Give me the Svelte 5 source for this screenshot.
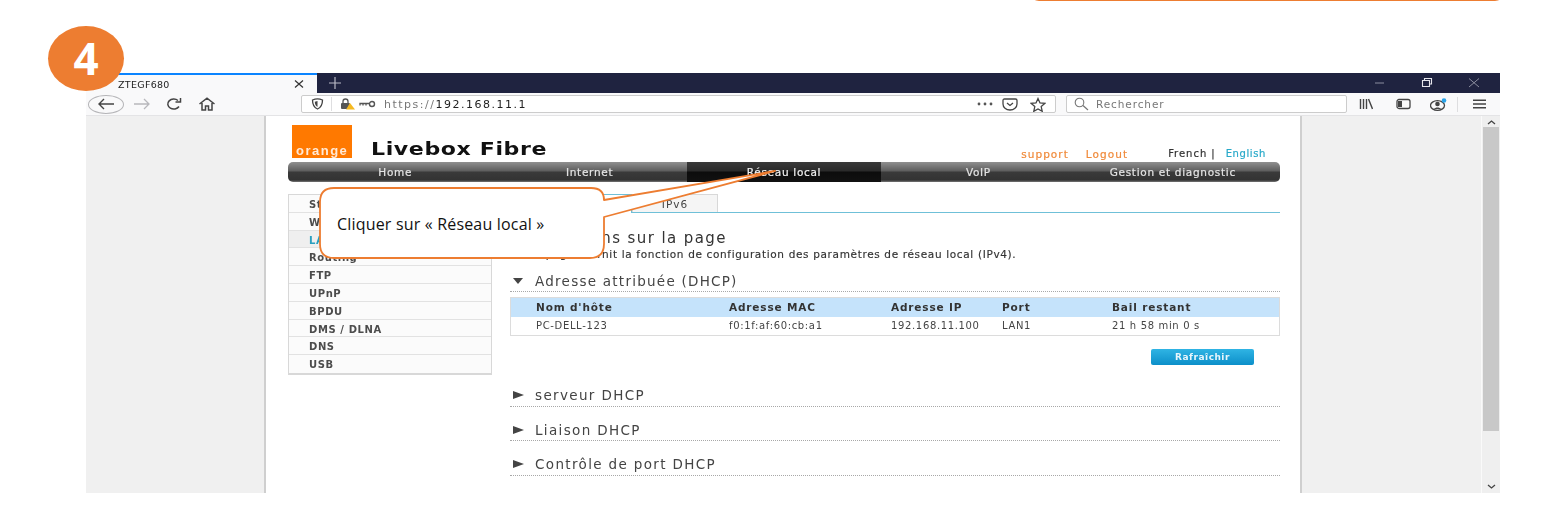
<script>
  const navItems = ['Home', 'Internet', 'Réseau local', 'VoIP', 'Gestion et diagnostic'];
  const sideItems = ['Statut', 'WAN', 'LAN', 'Routing', 'FTP', 'UPnP', 'BPDU', 'DMS / DLNA', 'DNS', 'USB'];
  const closedSections = ['serveur DHCP', 'Liaison DHCP', 'Contrôle de port DHCP'];
</script>

<div class="screen">
  <div class="note-top"></div>

  <div class="browser">
    <div class="tabstrip">
      <div class="tab">
        <span class="tab-title">ZTEGF680</span>
        <svg class="tab-x" width="10" height="10" viewBox="0 0 10 10"><path d="M1 1.500l8 7M9 1.500l-8 7" stroke="#333" stroke-width="1.200" fill="none"/></svg>
      </div>
      <svg class="plus" width="14" height="14" viewBox="0 0 14 14"><path d="M7 1v12M1 7h12" stroke="#b9bac6" stroke-width="1.200"/></svg>
      <div class="winctl">
        <svg width="12" height="12" viewBox="0 0 12 12"><path d="M1 6h9" stroke="#8b8d9e" stroke-width="1"/></svg>
        <svg width="12" height="12" viewBox="0 0 12 12"><path d="M1.500 3.500h7v6h-7zM3.500 3.500v-2h7v5.500h-2" stroke="#e6e6ec" stroke-width="1.100" fill="none"/></svg>
        <svg width="12" height="12" viewBox="0 0 12 12"><path d="M1 1.500l10 8.500M11 1.500l-10 8.500" stroke="#8b8d9e" stroke-width="1" fill="none"/></svg>
      </div>
    </div>

    <div class="toolbar">
      <div class="navbtns">
        <span class="back">
          <svg width="20" height="12" viewBox="0 0 20 12"><path d="M18 6H3M8 1L3 6l5 5" stroke="#444" stroke-width="1.400" fill="none"/></svg>
        </span>
        <svg class="fwd" width="20" height="12" viewBox="0 0 20 12"><path d="M2 6h15M12 1l5 5-5 5" stroke="#b8b8bc" stroke-width="1.300" fill="none"/></svg>
        <svg class="reload" width="18" height="14" viewBox="0 0 18 14"><path d="M14 9.500A6 5 0 1 1 13 3.500M15.500 1v4h-5" stroke="#444" stroke-width="1.500" fill="none"/></svg>
        <svg class="home" width="18" height="14" viewBox="0 0 18 14"><path d="M1.500 7L9 1.200 16.500 7M4 6v7h3.500V9h3v4H14V6" stroke="#444" stroke-width="1.500" fill="none"/></svg>
      </div>

      <div class="urlbar">
        <svg class="shield" width="13" height="12" viewBox="0 0 13 12"><path d="M1.500 2c3-1.300 7-1.300 10 0 0 4-1.500 7.500-5 9-3.500-1.500-5-5-5-9z" stroke="#444" stroke-width="1.300" fill="none"/><path d="M6.500 3v6c-1.800-1-2.600-3-2.700-5.300z" fill="#444"/></svg>
        <span class="sep"></span>
        <svg class="lock" width="16" height="12" viewBox="0 0 16 12"><rect x="1" y="5" width="9" height="6" rx="1" fill="#555"/><path d="M3 5V3.500a2.500 2.500 0 0 1 5 0V5" stroke="#555" stroke-width="1.300" fill="none"/><path d="M10 5l5 6.500H6z" fill="#f5b921"/></svg>
        <svg class="key" width="17" height="8" viewBox="0 0 17 8"><circle cx="13" cy="4" r="2.500" stroke="#555" stroke-width="1.400" fill="none"/><path d="M10 3.500H1v2M4 3.500v2M7 3.500v2" stroke="#555" stroke-width="1.300" fill="none"/></svg>
        <span class="url"><span class="url-dim">https://</span>192.168.11.1</span>
        <svg class="dots" width="16" height="4" viewBox="0 0 16 4"><circle cx="2" cy="2" r="1.400" fill="#555"/><circle cx="8" cy="2" r="1.400" fill="#555"/><circle cx="14" cy="2" r="1.400" fill="#555"/></svg>
        <svg class="pocket" width="16" height="13" viewBox="0 0 16 13"><path d="M1 2.500Q1 1 2.500 1h11Q15 1 15 2.500V6c0 3.500-3 6-7 6S1 9.500 1 6z" stroke="#444" stroke-width="1.300" fill="none"/><path d="M5 5l3 2.500L11 5" stroke="#444" stroke-width="1.300" fill="none"/></svg>
        <svg class="star" width="16" height="15" viewBox="0 0 16 15"><path d="M8 1.500l2 4.400 4.800.5-3.600 3.200 1 4.700L8 11.900l-4.200 2.400 1-4.700L1.200 6.400 6 5.900z" stroke="#444" stroke-width="1.300" fill="none"/></svg>
      </div>

      <div class="searchbar">
        <svg width="15" height="14" viewBox="0 0 15 14"><circle cx="5.500" cy="5.500" r="4.300" stroke="#777" stroke-width="1.100" fill="none"/><path d="M9 8.500l5 4.500" stroke="#777" stroke-width="1.200"/></svg>
        <span>Rechercher</span>
      </div>

      <div class="tools">
        <svg class="t-lib" width="14" height="12" viewBox="0 0 14 12"><path d="M1.500 1v10M4.500 1v10M7.500 1v10M9.500 1l4 10" stroke="#444" stroke-width="1.400" fill="none"/></svg>
        <svg class="t-side" width="15" height="12" viewBox="0 0 15 12"><rect x="1" y="1.500" width="13" height="9" rx="2" stroke="#444" stroke-width="1.300" fill="none"/><rect x="2" y="3" width="4" height="6" fill="#444"/></svg>
        <svg class="t-acc" width="17" height="13" viewBox="0 0 17 13"><ellipse cx="7.500" cy="7.500" rx="7" ry="4.800" stroke="#444" stroke-width="1.300" fill="none"/><circle cx="7.500" cy="6" r="2.300" fill="#444"/><path d="M4 11c1-2 6-2 7 0z" fill="#444"/><circle cx="14" cy="2.500" r="2.300" fill="#2aa3e8"/></svg>
        <span class="sep"></span>
        <svg class="t-menu" width="13" height="10" viewBox="0 0 13 10"><path d="M0 1.200h13M0 5h13M0 8.800h13" stroke="#444" stroke-width="1.400"/></svg>
      </div>
    </div>

    <div class="viewport">
      <div class="page">
        <header class="head">
          <div class="logo"><span>orange</span></div>
          <h1>Livebox Fibre</h1>
          <div class="links">
            <a class="support" href="#top">support</a>
            <a class="logout" href="#top">Logout</a>
            <span class="lang">French |</span>
            <a class="english" href="#top">English</a>
          </div>
        </header>

        <nav class="mainnav">
          {#each navItems as item, i}
            <a href="#top" class:active={i === 2}>{item}</a>
          {/each}
        </nav>

        <div class="body">
          <ul class="side">
            {#each sideItems as item, i}
              <li class:current={i === 2}>{item}</li>
            {/each}
          </ul>

          <main>
            <div class="tabs">
              <span class="subtab on">IPv4</span>
              <span class="subtab">IPv6</span>
            </div>

            <h2>Informations sur la page</h2>
            <p class="desc">Cette page fournit la fonction de configuration des paramètres de réseau local (IPv4).</p>

            <div class="section first">
              <i class="tri down"></i><span>Adresse attribuée (DHCP)</span>
            </div>

            <table>
              <thead>
                <tr><th>Nom d'hôte</th><th>Adresse MAC</th><th>Adresse IP</th><th>Port</th><th>Bail restant</th></tr>
              </thead>
              <tbody>
                <tr><td>PC-DELL-123</td><td>f0:1f:af:60:cb:a1</td><td>192.168.11.100</td><td>LAN1</td><td>21 h 58 min 0 s</td></tr>
              </tbody>
            </table>

            <div class="actions"><button>Rafraîchir</button></div>

            {#each closedSections as s}
              <div class="section">
                <i class="tri right"></i><span>{s}</span>
              </div>
            {/each}
          </main>
        </div>
      </div>

      <div class="gutter"></div>

      <div class="scrollbar">
        <svg width="9" height="6" viewBox="0 0 9 6"><path d="M1 5l3.500-3L8 5" stroke="#444" stroke-width="1.300" fill="none"/></svg>
        <div class="thumb"></div>
        <svg width="9" height="6" viewBox="0 0 9 6"><path d="M1 1l3.500 3L8 1" stroke="#444" stroke-width="1.300" fill="none"/></svg>
      </div>
    </div>
  </div>

  <div class="badge">4</div>

  <div class="callout">
    <svg class="callout-shape" width="470" height="82" viewBox="0 0 470 82">
      <path d="M15 10H272Q285 10 285 22L456 -7L285 39V66Q285 80 271 80H15Q1 80 1 66V24Q1 10 15 10Z" fill="#fff" stroke="#ed7d31" stroke-width="1.800" stroke-linejoin="round"/>
    </svg>
    <span class="callout-text">Cliquer sur « Réseau local »</span>
  </div>
</div>

<style>
  :global(body) {
    margin: 0;
    background: #fff;
  }

  .screen {
    position: relative;
    width: 1557px;
    height: 511px;
    padding-top: 73px;
    box-sizing: border-box;
    overflow: hidden;
    background: #fff;
    font-family: "DejaVu Sans", Verdana, sans-serif;
  }

  .note-top {
    position: absolute;
    left: 1030px;
    top: -20px;
    width: 472px;
    height: 19px;
    border: 1.500px solid #ed7d31;
    border-radius: 9px;
  }

  .browser {
    width: 1414px;
    height: 420px;
    margin-left: 86px;
    display: flex;
    flex-direction: column;
    filter: blur(0.35px);
  }

  .tabstrip {
    height: 20px;
    flex: none;
    display: flex;
    align-items: center;
    background: #1f2340;
  }

  .tab {
    width: 231px;
    height: 20px;
    box-sizing: border-box;
    border-top: 2px solid #0a84ff;
    background: #f9f9fa;
    display: flex;
    align-items: center;
    justify-content: space-between;
    padding: 0 13px 0 32px;
  }

  .tab-title {
    font-size: 9.500px;
    letter-spacing: 0.3px;
    color: #222;
  }

  .plus {
    margin-left: 11px;
  }

  .winctl {
    margin-left: auto;
    display: flex;
    gap: 35px;
    padding-right: 20px;
  }

  .toolbar {
    height: 23px;
    flex: none;
    display: flex;
    align-items: center;
    background: #f9f9fa;
    border-bottom: 1px solid #e4e4e6;
    box-sizing: border-box;
  }

  .navbtns {
    width: 215px;
    flex: none;
    display: flex;
    align-items: center;
    padding-left: 2px;
    box-sizing: border-box;
  }

  .back {
    width: 36px;
    height: 19px;
    border: 1px solid #b5b5b8;
    border-radius: 50%;
    box-sizing: border-box;
    display: flex;
    align-items: center;
    justify-content: center;
  }

  .fwd {
    margin-left: 8px;
  }

  .reload {
    margin-left: 13px;
  }

  .home {
    margin-left: 15px;
  }

  .urlbar {
    width: 755px;
    height: 18px;
    flex: none;
    box-sizing: border-box;
    background: #fff;
    border: 1px solid #ccc;
    border-radius: 2px;
    display: flex;
    align-items: center;
    padding-left: 9px;
  }

  .sep {
    width: 1px;
    height: 14px;
    background: #dedee0;
  }

  .urlbar .sep {
    margin-left: 7px;
  }

  .lock {
    margin-left: 8px;
  }

  .key {
    margin-left: 3px;
  }

  .url {
    margin-left: 8px;
    font-size: 11px;
    letter-spacing: 1.500px;
    color: #222;
  }

  .url-dim {
    color: #777;
  }

  .dots {
    margin-left: auto;
  }

  .pocket {
    margin-left: 9px;
  }

  .star {
    margin-left: 12px;
    margin-right: 9px;
  }

  .searchbar {
    width: 281px;
    height: 18px;
    flex: none;
    margin-left: 10px;
    box-sizing: border-box;
    background: #fff;
    border: 1px solid #ccc;
    border-radius: 2px;
    display: flex;
    align-items: center;
    gap: 7px;
    padding-left: 7px;
    font-size: 10.500px;
    letter-spacing: 0.9px;
    color: #777;
  }

  .tools {
    flex: 1;
    display: flex;
    align-items: center;
    padding-left: 12px;
  }

  .t-side {
    margin-left: 23px;
  }

  .t-acc {
    margin-left: 19px;
  }

  .tools .sep {
    margin-left: 10px;
    height: 15px;
  }

  .t-menu {
    margin-left: 15px;
  }

  .viewport {
    flex: 1;
    min-height: 0;
    display: flex;
    background: #f0f0f0;
    overflow: hidden;
    padding-left: 178px;
  }

  .page {
    width: 1038px;
    flex: none;
    box-sizing: border-box;
    background: #fff;
    border-left: 2px solid #cfcfcf;
    border-right: 2px solid #cfcfcf;
    padding: 0 20px 0 22px;
  }

  .head {
    height: 46px;
    display: flex;
    align-items: flex-end;
  }

  .logo {
    width: 60px;
    height: 33px;
    margin: 0 0 4px 4px;
    background: #ff7900;
    display: flex;
    align-items: flex-end;
    box-sizing: border-box;
    padding: 0 0 1px 4px;
    flex: none;
  }

  .logo span {
    color: #ffe9d6;
    font-family: "Liberation Sans", Arial, sans-serif;
    font-weight: 700;
    font-size: 13px;
    letter-spacing: 1.500px;
    line-height: 12px;
  }

  h1 {
    margin: 0 0 1px 19px;
    font-size: 18px;
    font-weight: 700;
    letter-spacing: 0.5px;
    line-height: 24px;
    color: #111;
    transform: scaleX(1.226);
    transform-origin: left center;
  }

  .links {
    margin-left: auto;
    padding-right: 14px;
    padding-bottom: 2px;
    display: flex;
    font-size: 10.500px;
    letter-spacing: 1.050px;
    line-height: 12px;
    -webkit-text-stroke: 0.2px;
  }

  .links a {
    text-decoration: none;
  }

  .support,
  .logout {
    color: #f08a3a;
  }

  .logout {
    margin-left: 17px;
  }

  .lang {
    margin-left: 40px;
    color: #333;
    font-size: 10px;
    letter-spacing: 0.97px;
  }

  .english {
    margin-left: 10px;
    color: #27a9c9;
    font-size: 10px;
    letter-spacing: 0.6px;
  }

  .mainnav {
    height: 20px;
    box-sizing: border-box;
    padding: 0 10px;
    display: grid;
    grid-template-columns: repeat(5, 1fr);
    border-radius: 5px;
    background: linear-gradient(#8f8f8f 0, #5e5e5e 45%, #3a3a3a 50%, #333 90%, #777 100%);
  }

  .mainnav a {
    display: block;
    text-align: center;
    text-decoration: none;
    color: #e4e4e4;
    font-size: 10.500px;
    letter-spacing: 0.7px;
    line-height: 20px;
    -webkit-text-stroke: 0.2px;
  }

  .mainnav a.active {
    background: linear-gradient(#3a3a3a 0, #2a2a2a 45%, #0c0c0c 50%, #111 100%);
    color: #f2f2f2;
  }

  .body {
    display: flex;
    gap: 18px;
    padding-top: 12px;
  }

  .side {
    width: 204px;
    flex: none;
    box-sizing: border-box;
    margin: 0;
    padding: 0;
    list-style: none;
    border: 1px solid #d8d8d8;
    border-bottom-width: 2px;
    align-self: flex-start;
  }

  .side li {
    height: 17.800px;
    box-sizing: border-box;
    border-bottom: 1px solid #e2e2e2;
    padding: 1px 0 0 20px;
    font-size: 10px;
    font-weight: 700;
    letter-spacing: 0.6px;
    line-height: 17px;
    color: #4c4c4c;
    background: #fbfbfb;
  }

  .side li:last-child {
    border-bottom: 0;
  }

  .side li.current {
    color: #2aa0c0;
    background: #efefef;
  }

  main {
    width: 770px;
    flex: none;
  }

  .tabs {
    height: 19px;
    box-sizing: border-box;
    display: flex;
    padding-left: 36px;
    border-bottom: 1px solid #6fc0d8;
  }

  .subtab {
    width: 86px;
    height: 18px;
    box-sizing: border-box;
    text-align: center;
    font-size: 10.500px;
    letter-spacing: 1px;
    line-height: 18px;
    color: #444;
    border: 1px solid #d8d8d8;
    border-bottom: 0;
    background: #f5f5f5;
  }

  .subtab.on {
    border-color: #6fc0d8;
    background: #fff;
    height: 19px;
  }

  h2 {
    margin: 16px 0 0;
    font-size: 15px;
    font-weight: 400;
    letter-spacing: 1.400px;
    line-height: 18px;
    color: #333;
  }

  .desc {
    margin: 0;
    font-size: 10.500px;
    letter-spacing: 0.65px;
    line-height: 14px;
    color: #333;
    -webkit-text-stroke: 0.15px;
  }

  .section {
    height: 21px;
    margin-top: 12.500px;
    display: flex;
    align-items: center;
    border-bottom: 1px dotted #a8a8a8;
    font-size: 13.500px;
    letter-spacing: 1.350px;
    color: #444;
    padding-left: 3px;
  }

  .section.first {
    margin-top: 9px;
    letter-spacing: 1.250px;
  }

  .tri {
    width: 0;
    height: 0;
    margin-right: 11px;
    border-style: solid;
    border-color: transparent;
  }

  .tri.down {
    border-width: 6px 5.500px 0;
    border-top-color: #444;
    margin-right: 12px;
  }

  .tri.right {
    border-width: 4px 0 4px 11px;
    border-left-color: #444;
  }

  table {
    width: 770px;
    margin-top: 5px;
    border-collapse: collapse;
    table-layout: fixed;
    border: 1px solid #dcdcdc;
    font-size: 10px;
    letter-spacing: 0.65px;
  }

  th,
  td {
    padding: 0 0 2px;
    text-align: left;
    white-space: nowrap;
    color: #333;
  }

  th {
    height: 17px;
    background: #c5e3fb;
    font-weight: 700;
    font-size: 10.500px;
    letter-spacing: 0.85px;
  }

  td {
    height: 16px;
    color: #444;
  }

  th:nth-child(1),
  td:nth-child(1) {
    width: 193px;
    padding-left: 25px;
  }

  th:nth-child(2),
  td:nth-child(2) {
    width: 162px;
  }

  th:nth-child(3),
  td:nth-child(3) {
    width: 111px;
  }

  th:nth-child(4),
  td:nth-child(4) {
    width: 110px;
  }

  .actions {
    display: flex;
    justify-content: flex-end;
    padding: 13px 26px 0 0;
    height: 23px;
  }

  button {
    width: 103px;
    height: 16px;
    padding: 0;
    border: 0;
    border-radius: 2px;
    background: linear-gradient(#2fb4e4, #0c8fc9);
    color: #e8f6fc;
    font: 700 9px "DejaVu Sans", Verdana, sans-serif;
    letter-spacing: 0.5px;
  }

  .gutter {
    flex: 1;
  }

  .scrollbar {
    width: 19px;
    flex: none;
    box-sizing: border-box;
    padding: 3px 2px 3px;
    display: flex;
    flex-direction: column;
    align-items: center;
    border-left: 1px solid #fafafa;
    background: #efefef;
  }

  .thumb {
    width: 16px;
    height: 304px;
    margin: 2px 0 auto;
    background: #c8c8c8;
  }

  .badge {
    position: absolute;
    left: 48px;
    top: 26px;
    width: 76px;
    height: 65px;
    border-radius: 50%;
    background: #ed7d31;
    color: #fff;
    font: 700 44px/65px "Open Sans", "Liberation Sans", sans-serif;
    text-align: center;
  }

  .callout {
    position: absolute;
    left: 319px;
    top: 178px;
    width: 470px;
    height: 82px;
  }

  .callout-shape {
    position: absolute;
    left: 0;
    top: 0;
    overflow: visible;
  }

  .callout-text {
    position: absolute;
    left: 18px;
    top: 36px;
    font-family: "Open Sans", sans-serif;
    font-size: 16px;
    letter-spacing: 0.18px;
    line-height: 21px;
    color: #111;
    white-space: nowrap;
  }
</style>
